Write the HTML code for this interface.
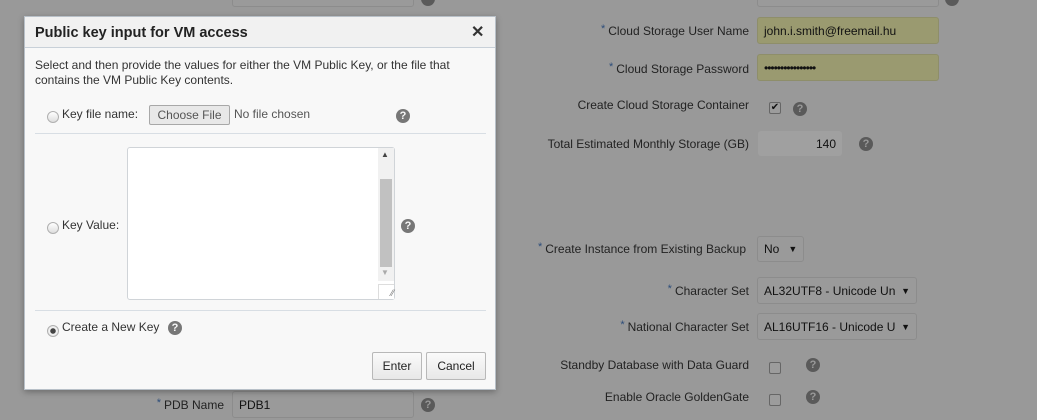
<!DOCTYPE html>
<html><head><meta charset="utf-8"><style>
*{box-sizing:border-box}
body{margin:0;width:1037px;height:420px;overflow:hidden;background:#999;font-family:"Liberation Sans",Arial,sans-serif;font-size:12px;color:#1f1f1f;position:relative}
.a{position:absolute}
.lbl{position:absolute;text-align:right;color:#222;font-size:12px;white-space:nowrap}
.star{color:#2d4d7a;font-size:11px;vertical-align:3px;margin-right:3px}
.inp{position:absolute;border:1px solid #8c8c8c;border-radius:3px;background:#9a9a9a;padding:0 6px;font-size:12px;color:#111;display:flex;align-items:center}
.hl{background:#9a9a70;border-color:#8e8e6a}
.q{position:absolute;width:14px;height:14px;border-radius:50%;background:#5a5a5a;color:#999;font-weight:bold;font-size:11px;text-align:center;line-height:14px}
.cb{position:absolute;width:12px;height:12px;border:1px solid #666;border-radius:2px;background:#9c9c9c}
.dlg{position:absolute;left:24px;top:16px;width:472px;height:374px;background:#f8f8f8;border:1px solid #b8c0c8;box-shadow:0 2px 6px rgba(0,0,0,.3)}
.dq{background:#777;color:#f8f8f8}
.radio{position:absolute;width:12px;height:12px;border-radius:50%;border:1px solid #b0b0b0;background:linear-gradient(#fff,#ddd)}
.btn{position:absolute;border:1px solid #b8b8b8;border-radius:2px;background:linear-gradient(#fafafa,#e8e8e8);font-size:12px;display:flex;align-items:center;justify-content:center;color:#222}
</style></head><body>
<div class="inp" style="left:232px;top:-8px;width:182px;height:15px"></div>
<div class="q" style="left:421px;top:-8px"></div>
<div class="inp" style="left:757px;top:-8px;width:182px;height:15px"></div>
<div class="q" style="left:945px;top:-8px"></div>

<div class="lbl" style="right:288px;top:23px"><span class="star">*</span>Cloud Storage User Name</div>
<div class="inp hl" style="left:757px;top:17px;width:182px;height:27px">john.i.smith@freemail.hu</div>
<div class="lbl" style="right:288px;top:61px"><span class="star">*</span>Cloud Storage Password</div>
<div class="inp hl" style="left:757px;top:54px;width:182px;height:27px;font-size:12px;letter-spacing:-1px">••••••••••••••••</div>
<div class="lbl" style="right:288px;top:98px">Create Cloud Storage Container</div>
<div class="cb" style="left:769px;top:102px;font-size:10px;line-height:10px;text-align:center;color:#111">✔</div>
<div class="q" style="left:793px;top:102px">?</div>
<div class="lbl" style="right:288px;top:137px">Total Estimated Monthly Storage (GB)</div>
<div class="inp" style="left:758px;top:131px;width:84px;height:25px;border:none;background:#a0a0a0;justify-content:flex-end;padding-right:6px">140</div>
<div class="q" style="left:859px;top:137px">?</div>

<div class="lbl" style="right:291px;top:241px"><span class="star">*</span>Create Instance from Existing Backup</div>
<div class="inp" style="left:757px;top:236px;width:47px;height:26px">No<span style="margin-left:9px;font-size:9px">▼</span></div>
<div class="lbl" style="right:288px;top:283px"><span class="star">*</span>Character Set</div>
<div class="inp" style="left:757px;top:277px;width:160px;height:27px;white-space:nowrap;overflow:hidden">AL32UTF8 - Unicode Un<span style="position:absolute;right:6px;font-size:9px">▼</span></div>
<div class="lbl" style="right:288px;top:319px"><span class="star">*</span>National Character Set</div>
<div class="inp" style="left:757px;top:313px;width:160px;height:27px;white-space:nowrap;overflow:hidden">AL16UTF16 - Unicode U<span style="position:absolute;right:6px;font-size:9px">▼</span></div>
<div class="lbl" style="right:288px;top:358px">Standby Database with Data Guard</div>
<div class="cb" style="left:769px;top:362px"></div>
<div class="q" style="left:806px;top:358px">?</div>
<div class="lbl" style="right:288px;top:390px">Enable Oracle GoldenGate</div>
<div class="cb" style="left:769px;top:394px"></div>
<div class="q" style="left:806px;top:390px">?</div>

<div class="lbl" style="right:813px;top:397px"><span class="star">*</span>PDB Name</div>
<div class="inp" style="left:232px;top:391px;width:182px;height:27px">PDB1</div>
<div class="q" style="left:421px;top:398px">?</div>

<div class="dlg">
  <div class="a" style="left:0;top:0;width:470px;height:31px;background:#f1f1f1;border-bottom:1px solid #c8d0d8"></div>
  <div class="a" style="left:10px;top:8px;font-size:14.5px;font-weight:bold;color:#222">Public key input for VM access</div>
  <div class="a" style="left:446px;top:5px;font-size:16px;font-weight:bold;color:#333">✕</div>
  <div class="a" style="left:10px;top:41px;width:440px;line-height:15px;color:#333">Select and then provide the values for either the VM Public Key, or the file that contains the VM Public Key contents.</div>
  <div class="radio" style="left:22px;top:94px"></div>
  <div class="a" style="left:37px;top:90px;color:#333">Key file name:</div>
  <div class="btn" style="left:124px;top:88px;width:81px;height:20px;color:#555;background:#e8e8e8;border-color:#a8a8a8">Choose File</div>
  <div class="a" style="left:209px;top:90px;color:#555">No file chosen</div>
  <div class="q dq" style="left:371px;top:92px">?</div>
  <div class="a" style="left:10px;top:116px;width:451px;height:1px;background:#d8dee4"></div>

  <div class="a" style="left:102px;top:130px;width:268px;height:153px;background:#fff;border:1px solid #d0d4d8;border-radius:3px"></div>
  <div class="a" style="left:353px;top:131px;width:16px;height:133px;background:#f1f1f1"></div>
  <div class="a" style="left:355px;top:162px;width:12px;height:88px;background:#c1c1c1"></div>
  <div class="a" style="left:356px;top:133px;font-size:8px;color:#444">▲</div>
  <div class="a" style="left:356px;top:251px;font-size:8px;color:#aaa">▼</div>
  <div class="a" style="left:353px;top:267px;width:16px;height:15px;border-left:1px solid #ddd;border-top:1px solid #ddd;background:#fff;font-size:9px;color:#777;text-align:right;line-height:16px">⁄⁄</div>
  <div class="radio" style="left:22px;top:205px"></div>
  <div class="a" style="left:37px;top:201px;color:#333">Key Value:</div>
  <div class="q dq" style="left:376px;top:202px">?</div>
  <div class="a" style="left:10px;top:293px;width:451px;height:1px;background:#d8dee4"></div>

  <div class="radio" style="left:22px;top:308px;background:radial-gradient(circle,#444 0 2.5px,#f4f4f4 3px,#ddd)"></div>
  <div class="a" style="left:37px;top:303px;color:#333">Create a New Key</div>
  <div class="q dq" style="left:143px;top:304px">?</div>
  <div class="btn" style="left:347px;top:335px;width:50px;height:28px">Enter</div>
  <div class="btn" style="left:401px;top:335px;width:60px;height:28px">Cancel</div>
</div>
</body></html>
